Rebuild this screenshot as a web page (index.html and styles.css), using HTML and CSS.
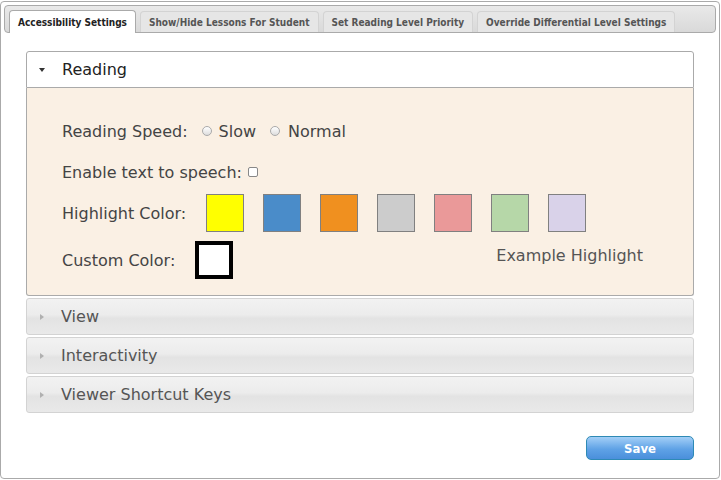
FILE: index.html
```html
<!DOCTYPE html>
<html>
<head>
<meta charset="utf-8">
<link rel="stylesheet" href="styles.css">
</head>
<body>
<div class="dialog">
  <div class="tabbar">
    <div class="tab active">Accessibility Settings</div>
    <div class="tab">Show/Hide Lessons For Student</div>
    <div class="tab">Set Reading Level Priority</div>
    <div class="tab">Override Differential Level Settings</div>
  </div>
  <div class="panel">
    <div class="accordion">
      <div class="acc-head open"><span class="arrow-down"></span>Reading</div>
      <div class="acc-body">
        <div class="row speed">
          <span class="label">Reading Speed:</span>
          <span class="radio"></span><span class="opt">Slow</span>
          <span class="radio"></span><span class="opt">Normal</span>
        </div>
        <div class="row tts">
          <span class="label">Enable text to speech:</span>
          <span class="check"></span>
        </div>
        <div class="row hl">
          <span class="label">Highlight Color:</span>
          <div class="swatches">
            <span class="sw yellow"></span>
            <span class="sw blue"></span>
            <span class="sw orange"></span>
            <span class="sw gray"></span>
            <span class="sw pink"></span>
            <span class="sw green"></span>
            <span class="sw lilac"></span>
          </div>
        </div>
        <div class="row custom">
          <span class="label">Custom Color:</span>
          <span class="custom-box"></span>
          <span class="example">Example Highlight</span>
        </div>
      </div>
      <div class="acc-head closed"><span class="arrow-right"></span>View</div>
      <div class="acc-head closed"><span class="arrow-right"></span>Interactivity</div>
      <div class="acc-head closed"><span class="arrow-right"></span>Viewer Shortcut Keys</div>
    </div>
    <div class="actions">
      <button class="save">Save</button>
    </div>
  </div>
</div>
</body>
</html>
```
FILE: styles.css
```css
html, body {
  margin: 0;
  padding: 0;
  background: #fff;
}
body {
  font-family: "DejaVu Sans", sans-serif;
}
.dialog {
  margin-top: 1px;
  border: 1px solid #aaa;
  border-radius: 4px;
  padding: 3px;
  box-sizing: content-box;
  width: 712px;
  height: 470px;
}
.tabbar {
  display: flex;
  gap: 4px;
  align-items: flex-end;
  height: 22px;
  padding: 4px 0 0 4px;
  border: 1px solid #aaa;
  border-radius: 4px;
  background: linear-gradient(#e9e9e9, #d9d9d9);
}
.tab {
  font-family: "DejaVu Sans Condensed", "DejaVu Sans", sans-serif;
  font-size: 10px;
  font-weight: bold;
  white-space: nowrap;
  color: #555;
  background: #e6e6e6;
  border: 1px solid #d3d3d3;
  border-bottom: none;
  border-radius: 4px 4px 0 0;
  height: 21px;
  line-height: 21px;
  padding: 0 8px;
  box-sizing: border-box;
}
.tab.active {
  background: #fff;
  color: #222;
  height: 23px;
  line-height: 23px;
  border-color: #aaa;
  margin-bottom: -1px;
  padding: 0 8px;
}
.panel {
  padding: 18px 22px 0 22px;
}
.accordion {
  display: flex;
  flex-direction: column;
  gap: 2px;
}
.acc-head {
  height: 37px;
  display: flex;
  align-items: center;
  font-size: 16px;
  border: 1px solid #d3d3d3;
  border-radius: 3px;
  padding-left: 12px;
  box-sizing: border-box;
}
.acc-head.open {
  background: #fff;
  color: #222;
  border-color: #aaa;
  border-radius: 3px 3px 0 0;
  height: 37px;
}
.acc-head.closed {
  color: #555;
  background: linear-gradient(#f2f2f2 0%, #ececec 45%, #e3e3e3 55%, #e9e9e9 100%);
}
.arrow-down {
  width: 0; height: 0;
  border-left: 3px solid transparent;
  border-right: 3px solid transparent;
  border-top: 4px solid #333;
  margin-right: 17px;
  margin-left: 0;
}
.arrow-right {
  width: 0; height: 0;
  border-top: 3px solid transparent;
  border-bottom: 3px solid transparent;
  border-left: 4px solid #b0b0b0;
  margin-right: 17px;
  margin-left: 1px;
}
.accordion .acc-body {
  margin-top: -2px;
  background: #faf0e4;
  border: 1px solid #aaa;
  border-top: none;
  border-radius: 0 0 3px 3px;
  height: 208px;
  padding: 28px 0 0 35px;
  box-sizing: border-box;
  color: #444;
  font-size: 16px;
}
.row {
  display: flex;
  align-items: center;
}
.speed { height: 30px; }
.tts { height: 30px; margin-top: 11px; }
.hl { height: 38px; margin-top: 7px; }
.custom { height: 38px; margin-top: 9px; }
.label { white-space: nowrap; }
.radio {
  width: 8px; height: 8px;
  border: 1px solid #aaa;
  border-radius: 50%;
  background: linear-gradient(#fff, #ddd);
  margin: 0 7px 0 14px;
}
.opt + .radio { margin-left: 14px; margin-right: 8px; }
.check {
  width: 8px; height: 8px;
  border: 1px solid #888;
  border-radius: 2px;
  background: #fff;
  margin-left: 6px;
}
.swatches {
  display: flex;
  gap: 19px;
  margin-left: 20px;
}
.sw {
  width: 38px; height: 38px;
  box-sizing: border-box;
  border: 1px solid #808080;
}
.yellow { background: #ffff00; }
.blue { background: #4a8cc9; }
.orange { background: #f0901f; }
.gray { background: #cccccc; }
.pink { background: #ea9999; }
.green { background: #b6d7a8; }
.lilac { background: #d9d2e9; }
.custom-box {
  width: 38px; height: 38px;
  box-sizing: border-box;
  border: 4px solid #000;
  background: #fff;
  margin-left: 20px;
}
.example {
  margin-left: 263px;
  margin-bottom: 10px;
  color: #555;
}
.actions {
  display: flex;
  justify-content: flex-end;
  padding-top: 23px;
}
.save {
  width: 108px;
  height: 24px;
  border: 1px solid #2e8ab5;
  border-radius: 5px;
  background: linear-gradient(#a3cff7, #5fa2e6 55%, #4a8fdb);
  color: #fff;
  font-family: "DejaVu Sans Condensed", "DejaVu Sans", sans-serif;
  font-weight: bold;
  font-size: 13px;
  padding: 0;
}
```
